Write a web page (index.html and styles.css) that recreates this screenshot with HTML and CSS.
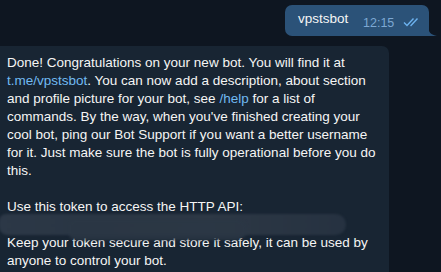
FILE: index.html
```html
<!DOCTYPE html>
<html lang="en">

<head>
    <meta charset="UTF-8">
    <title>BotFather</title>
    <link rel="stylesheet" href="styles.css">
</head>

<body>

    <div class="row-out">
        <div class="bubble-out">
            <span class="out-text">vpstsbot</span>
            <span class="out-time">12:15</span>
            <svg class="checks" width="17" height="10" viewBox="0 0 17 10">
                <path d="M1 5.5 L4 8.5 L10.5 1.5" fill="none" stroke="#6cb2ef" stroke-width="1.4" />
                <path d="M7.5 8 L8 8.5 L14.5 1.5" fill="none" stroke="#6cb2ef" stroke-width="1.4" />
            </svg>
            <svg class="tail" width="9" height="10" viewBox="0 0 9 10">
                <path d="M0 0 C0 6 3 9 9 10 L0 10 Z" fill="#2b5278" />
            </svg>
        </div>
    </div>

    <div class="bubble-in">
        <p class="para">Done! Congratulations on your new bot. You will find it at <a class="link">t.me/vpstsbot</a>. You can now add a description, about section and profile picture for your bot, see <a class="link">/help</a> for a list of commands. By the way, when you've finished creating your cool bot, ping our Bot Support if you want a better username for it. Just make sure the bot is fully operational before you do this.</p>
        <p>Use this token to access the HTTP API:</p>
        <div class="token">
            <span class="smudge"></span>
            <span class="smudge smudge-low"></span>
        </div>
        <p>Keep your token secure and store it safely, it can be used by anyone to control your bot.</p>
    </div>

</body>

</html>
```
FILE: styles.css
```css
* {
    box-sizing: border-box;
}

body {
    margin: 0;
    background-color: #0e1621;
    color: #f5f5f5;
    font-family: 'Liberation Sans', Arial, sans-serif;
    font-size: 13.5px;
    line-height: 18px;
    overflow: hidden;
}

.row-out {
    display: flex;
    justify-content: flex-end;
    padding: 5px 12px 0 0;
}

.bubble-out {
    position: relative;
    display: flex;
    align-items: flex-end;
    width: 144px;
    height: 31px;
    padding: 0 0 6px 13px;
    background-color: #2b5278;
    border-radius: 7px 7px 0 7px;
}

.out-text {
    width: 53px;
    margin-bottom: 2px;
}

.out-time {
    margin-left: 12px;
    color: #7da8d3;
    font-size: 12.5px;
    line-height: 14px;
}

.checks {
    margin: 0 0 3px 9px;
}

.tail {
    position: absolute;
    right: -8px;
    bottom: 0;
}

.bubble-in {
    width: 389px;
    margin-top: 10px;
    padding: 8px 12px 8px 7px;
    background-color: #182533;
    border-radius: 0 7px 7px 0;
    min-height: 240px;
}

.bubble-in p {
    margin: 0;
}

.bubble-in .para {
    margin-bottom: 18px;
}

.link {
    color: #71baf2;
}

/* blurred token, drawn over the text around it */
.token {
    position: relative;
    height: 18px;
}

.smudge {
    position: absolute;
    left: -8px;
    top: -2px;
    width: 347px;
    height: 21px;
    background: linear-gradient(90deg, #2c3847 0%, #2a3644 25%, #2d3845 60%, #263241 100%);
    border-radius: 8px 12px 12px 10px;
    filter: blur(1.2px);
}

.smudge-low {
    left: 62px;
    top: 4px;
    width: 178px;
    height: 20px;
    background: #2b3745;
    border-radius: 4px 8px 10px 6px;
    opacity: 0.85;
    filter: blur(1.5px);
}
```
